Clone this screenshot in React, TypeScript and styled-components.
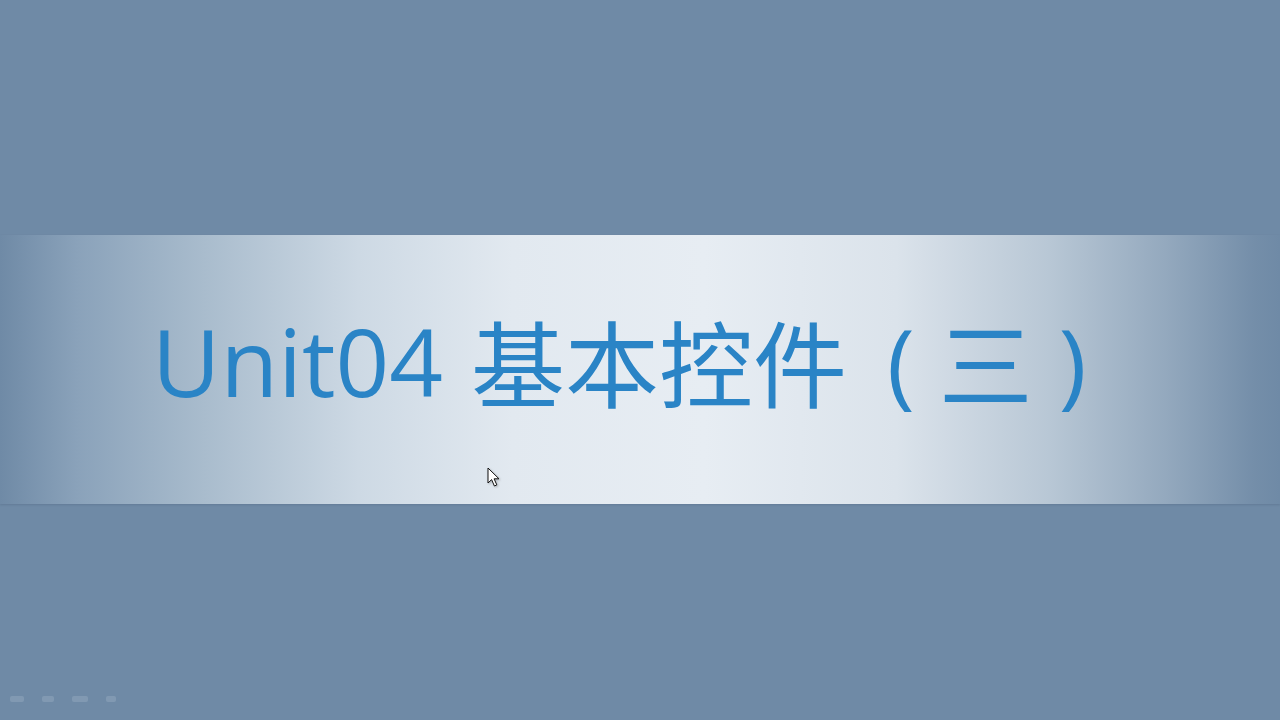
import React from 'react';
import styled, { createGlobalStyle } from 'styled-components';

const GlobalStyle = createGlobalStyle`
  html, body {
    margin: 0;
    padding: 0;
    background: #6f8aa6;
  }
`;

function App() {
  return (
    <>
      <GlobalStyle />
      <Slide>
        <Band>
          <Title>
            <Latin>Unit04</Latin>
            <Han>基本控件</Han>
            <Paren before={40} after={24}>(</Paren>
            <Han>三</Han>
            <Paren before={26} after={0}>)</Paren>
          </Title>
          <Cursor width="14" height="22" viewBox="0 0 14 22">
            <path d="M1 1 L1 16 L4.6 12.6 L7.4 19 L9.8 17.9 L7.1 11.8 L12 11.8 Z" fill="#fff" stroke="#111" strokeWidth="1" strokeLinejoin="round" />
          </Cursor>
        </Band>
        <Controls>
          <Ctrl w={14} />
          <Ctrl w={12} />
          <Ctrl w={16} />
          <Ctrl w={10} />
        </Controls>
      </Slide>
    </>
  );
}

const Slide = styled.main`
  position: relative;
  width: 1280px;
  height: 720px;
  overflow: hidden;
  background: #6f8aa6;
  padding-top: 235px;
  box-sizing: border-box;
`;

const Band = styled.section`
  position: relative;
  height: 269px;
  display: flex;
  align-items: center;
  padding: 0 0 22px 152px;
  box-sizing: border-box;
  background: linear-gradient(
    to right,
    #6f8aa6 0%,
    #8aa2ba 6%,
    #a9bccd 16%,
    #cdd9e4 28%,
    #e2e9f0 40%,
    #e7edf3 55%,
    #dbe3eb 70%,
    #b8c7d5 82%,
    #94a9be 91%,
    #748ea9 98%,
    #6f8aa6 100%
  );
  box-shadow: 0 1px 2px rgba(60, 80, 105, 0.25);
`;

const Title = styled.h1`
  margin: 0;
  display: flex;
  align-items: baseline;
  font-family: "Noto Sans CJK SC", "Noto Sans", sans-serif;
  font-weight: 400;
  line-height: 1;
  color: #2a84c6;
  white-space: nowrap;
`;

const Latin = styled.span`
  font-family: "Open Sans", "Noto Sans", sans-serif;
  font-size: 94px;
  margin-right: 28px;
`;

const Han = styled.span`
  font-size: 94px;
  position: relative;
  top: 4px;
`;

const Paren = styled.span<{ before: number; after: number }>`
  font-family: "Open Sans", "Noto Sans", sans-serif;
  font-size: 94px;
  font-weight: 400;
  margin: 0 ${p => p.after}px 0 ${p => p.before}px;
`;

const Cursor = styled.svg`
  position: absolute;
  left: 487px;
  top: 232px;
  filter: drop-shadow(1px 1px 1px rgba(0, 0, 0, 0.25));
`;

const Controls = styled.div`
  position: absolute;
  left: 10px;
  bottom: 18px;
  display: flex;
  gap: 18px;
  align-items: center;
  opacity: 0.25;
`;

const Ctrl = styled.span<{ w: number }>`
  display: block;
  width: ${p => p.w}px;
  height: 6px;
  border-radius: 2px;
  background: #b8c8d8;
`;

export default App;
